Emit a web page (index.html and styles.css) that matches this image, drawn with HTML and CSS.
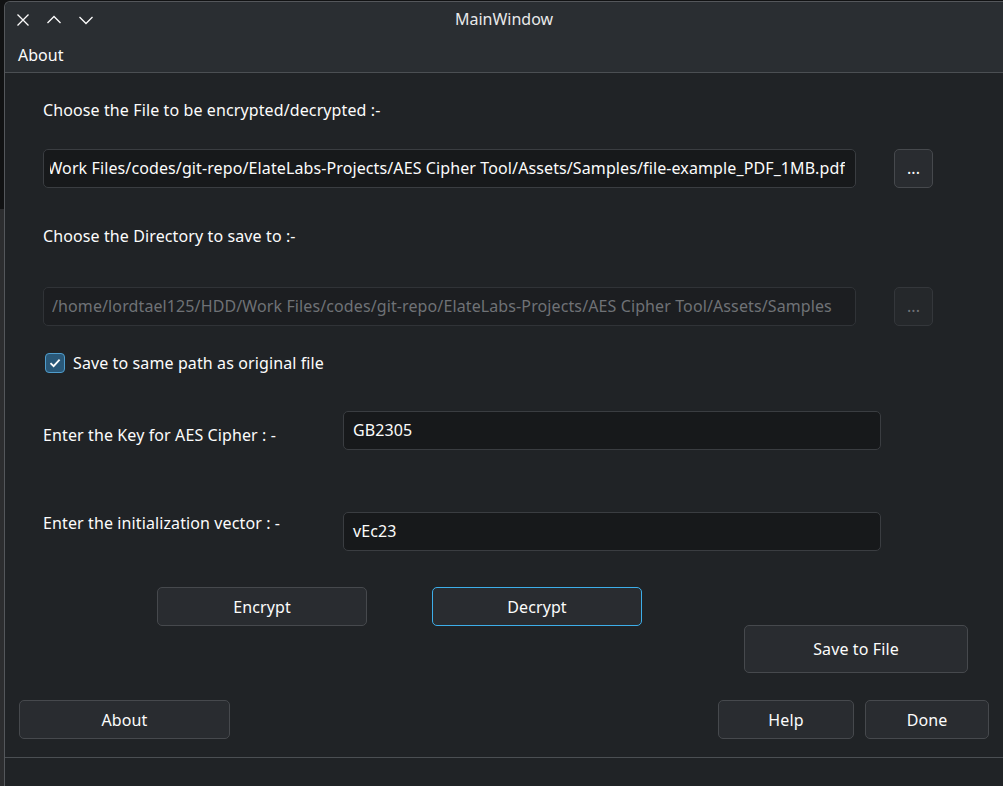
FILE: index.html
```html
<!DOCTYPE html>
<html lang="en">
<head>
<meta charset="utf-8">
<title>MainWindow</title>
<link rel="stylesheet" href="styles.css">
</head>
<body>
<div class="window">
  <header class="titlebar">
    <div class="tb-buttons">
      <svg class="tb-icon" width="14" height="14" viewBox="0 0 14 14"><path d="M1.5 1.5 L12.5 12.5 M12.5 1.5 L1.5 12.5" stroke="#fcfcfc" stroke-width="1.3" fill="none"/></svg>
      <svg class="tb-icon" width="16" height="14" viewBox="0 0 16 14"><path d="M1.5 10 L8 3.5 L14.5 10" stroke="#fcfcfc" stroke-width="1.3" fill="none"/></svg>
      <svg class="tb-icon" width="16" height="14" viewBox="0 0 16 14"><path d="M1.5 4 L8 10.5 L14.5 4" stroke="#fcfcfc" stroke-width="1.3" fill="none"/></svg>
    </div>
    <div class="tb-title">MainWindow</div>
  </header>
  <nav class="menubar"><span class="menu-item">About</span></nav>
  <main class="content">
    <div class="label l-file">Choose the File to be encrypted/decrypted :-</div>
    <div class="path-row r-file">
      <div class="field path-field"><div class="clip"><span>/home/lordtael125/HDD/Work Files/codes/git-repo/ElateLabs-Projects/AES Cipher Tool/Assets/Samples/file-example_PDF_1MB.pdf</span></div></div>
      <button class="btn dots">...</button>
    </div>
    <div class="label l-dir">Choose the Directory to save to :-</div>
    <div class="path-row r-dir">
      <div class="field path-field disabled"><div class="clip"><span>/home/lordtael125/HDD/Work Files/codes/git-repo/ElateLabs-Projects/AES Cipher Tool/Assets/Samples</span></div></div>
      <button class="btn dots disabled">...</button>
    </div>
    <label class="check-row">
      <span class="checkbox"><svg width="14" height="14" viewBox="0 0 14 14"><path d="M2.5 7.2 L5.6 10.2 L11.6 3.6" stroke="#fcfcfc" stroke-width="1.8" fill="none"/></svg></span>
      <span>Save to same path as original file</span>
    </label>
    <div class="form-row r-key">
      <div class="label form-label key-label">Enter the Key for AES Cipher : -</div>
      <div class="field form-field">GB2305</div>
    </div>
    <div class="form-row r-iv">
      <div class="label form-label">Enter the initialization vector : -</div>
      <div class="field form-field">vEc23</div>
    </div>
    <div class="action-row">
      <button class="btn action">Encrypt</button>
      <button class="btn action focus">Decrypt</button>
    </div>
    <div class="save-row">
      <button class="btn save">Save to File</button>
    </div>
    <div class="bottom-row">
      <button class="btn about">About</button>
      <div class="spacer"></div>
      <button class="btn help">Help</button>
      <button class="btn done">Done</button>
    </div>
  </main>
  <footer class="statusbar"></footer>
</div>
</body>
</html>
```
FILE: styles.css
```css
html, body {
  margin: 0;
  padding: 0;
}
body {
  width: 1003px;
  height: 786px;
  overflow: hidden;
  background: linear-gradient(to bottom, #111213 0, #111213 209px, #2c2d2f 209px, #2c2d2f 100%);
  font-family: "Noto Sans", "Open Sans", sans-serif;
  font-size: 16px;
  letter-spacing: 0.11px;
  color: #fcfcfc;
}
.window {
  margin: 1px 0 0 4px;
  height: 785px;
  width: 1010px;
  box-sizing: border-box;
  border-top: 1px solid #54575b;
  border-left: 1px solid #54575b;
  border-top-left-radius: 6px;
  background: #202326;
  display: flex;
  flex-direction: column;
  overflow: hidden;
}
.titlebar {
  height: 36px;
  flex: none;
  background: #2a2e32;
  position: relative;
  display: flex;
  align-items: center;
}
.tb-buttons {
  display: flex;
  align-items: center;
  gap: 16px;
  padding-left: 11px;
  position: relative;
  z-index: 1;
}
.tb-icon { display: block; }
.tb-title {
  position: absolute;
  left: 0;
  width: 998px;
  top: 0;
  height: 34px;
  line-height: 34px;
  text-align: center;
  color: #e8e9ea;
  letter-spacing: 0;
}
.menubar {
  height: 34px;
  flex: none;
  background: #2a2e32;
  border-bottom: 1px solid #4b4f53;
  display: flex;
  align-items: center;
  padding-left: 13px;
  letter-spacing: 0;
}
.content {
  flex: 1;
  display: flex;
  flex-direction: column;
  padding-left: 38px;
}
.label {
  line-height: 22px;
  height: 22px;
  white-space: nowrap;
}
.l-file { margin-top: 26px; }
.path-row {
  display: flex;
  align-items: center;
  gap: 38px;
  height: 40px;
}
.r-file { margin-top: 27px; }
.l-dir { margin-top: 37px; }
.r-dir { margin-top: 39px; }
.field {
  box-sizing: border-box;
  height: 39px;
  line-height: 37px;
  background: #17191b;
  border: 1px solid #3a3d41;
  border-radius: 5px;
  padding: 0 9px;
  white-space: nowrap;
}
.path-field {
  width: 813px;
  display: flex;
  padding: 0 10px 0 6px;
}
.clip {
  flex: 1;
  min-width: 0;
  display: flex;
  justify-content: flex-end;
  overflow: hidden;
}
.clip span { flex: none; }
.path-field.disabled {
  background: #1c1e21;
  border-color: #303337;
  color: #6f7276;
  padding-left: 8px;
}
.path-field.disabled .clip { justify-content: flex-start; }
.btn {
  box-sizing: border-box;
  font-family: inherit;
  font-size: 16px;
  letter-spacing: 0.11px;
  color: #fcfcfc;
  background: #292c30;
  border: 1px solid #46494d;
  border-radius: 5px;
  height: 39px;
  padding: 0;
  cursor: default;
}
.dots {
  width: 39px;
  flex: none;
  line-height: 1;
}
.dots.disabled {
  background: #25282b;
  border-color: #34373b;
  color: #6f7276;
}
.check-row {
  margin-top: 26px;
  display: flex;
  align-items: center;
  gap: 8px;
  height: 22px;
  padding-left: 2px;
}
.checkbox {
  box-sizing: border-box;
  width: 20px;
  height: 20px;
  border-radius: 4px;
  background: #2a5878;
  border: 1px solid #4f9ccb;
  display: flex;
  align-items: center;
  justify-content: center;
}
.form-row {
  display: flex;
  align-items: flex-start;
}
.form-label { width: 300px; }
.key-label { margin-top: 13px; }
.r-key { margin-top: 37px; }
.r-iv { margin-top: 62px; }
.form-field {
  width: 538px;
}
.action-row {
  margin-top: 36px;
  display: flex;
  gap: 65px;
  padding-left: 114px;
}
.action { width: 210px; }
.focus { border-color: #3daee9; }
.save-row {
  margin-top: -1px;
  padding-left: 701px;
  display: flex;
}
.save { width: 224px; height: 48px; }
.bottom-row {
  margin-top: 27px;
  margin-left: -24px;
  display: flex;
  width: 970px;
  gap: 11px;
}
.spacer { flex: 1; }
.about { width: 211px; }
.help { width: 136px; }
.done { width: 124px; }
.statusbar {
  flex: none;
  height: 28px;
  border-top: 1px solid #4b4f53;
  background: #202326;
}
```
